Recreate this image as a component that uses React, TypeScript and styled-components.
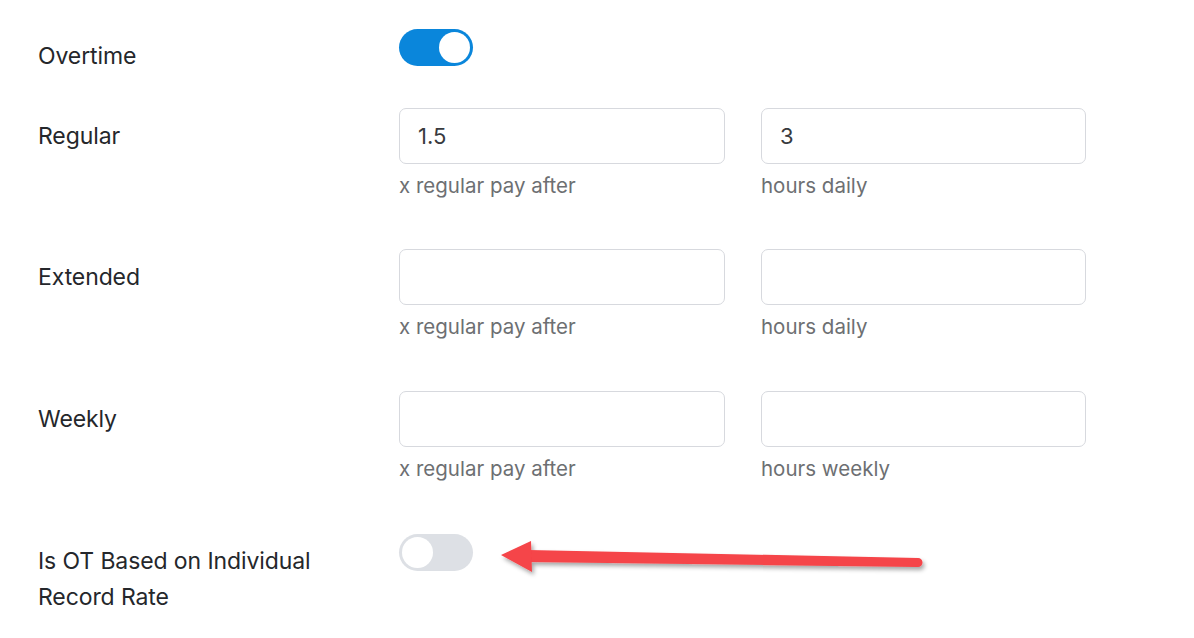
import React from "react";
import styled, { createGlobalStyle } from "styled-components";

const GlobalStyle = createGlobalStyle`
  html, body { margin: 0; padding: 0; background: #ffffff; }
  body { font-family: "Inter", "Noto Sans", sans-serif; }
  * { box-sizing: border-box; }
`;

const Page = styled.div`
  position: relative;
  width: 1194px;
  height: 638px;
  padding: 29px 0 0 38px;
  overflow: hidden;
`;

const Row = styled.div<{ $gapAfter: number }>`
  display: grid;
  grid-template-columns: 325px 326px 325px;
  column-gap: 36px;
  align-items: start;
  margin-bottom: ${(p) => p.$gapAfter}px;
`;

const Label = styled.div<{ $offset?: number; $tall?: boolean }>`
  font-size: 23px;
  line-height: 36px;
  color: #25272b;
  letter-spacing: -0.1px;
  padding-top: ${(p) => p.$offset ?? 0}px;
  ${(p) => (p.$tall ? "height: 56px; display: flex; align-items: center;" : "")}
`;

const Field = styled.div`
  display: flex;
  flex-direction: column;
`;

const Input = styled.input`
  width: 100%;
  height: 56px;
  border: 1px solid #d7d9de;
  border-radius: 7px;
  padding: 0 18px;
  font-family: inherit;
  font-size: 22px;
  color: #383a3e;
  background: #fff;
  outline: none;
`;

const Helper = styled.div`
  margin-top: 9px;
  font-size: 20.5px;
  line-height: 26px;
  color: #6d6f72;
`;

const Track = styled.div<{ $on: boolean }>`
  position: relative;
  width: 74px;
  height: 37px;
  border-radius: 19px;
  background: ${(p) => (p.$on ? "#0a86db" : "#dde0e5")};
`;

const Knob = styled.div<{ $on: boolean }>`
  position: absolute;
  top: 3px;
  left: ${(p) => (p.$on ? "40px" : "3px")};
  width: 31px;
  height: 31px;
  border-radius: 50%;
  background: #ffffff;
`;

const Arrow = styled.svg`
  position: absolute;
  left: 490px;
  top: 530px;
`;

function Toggle({ on }: { on: boolean }) {
  return (
    <Track $on={on}>
      <Knob $on={on} />
    </Track>
  );
}

const rows = [
  { label: "Regular", a: "1.5", b: "3", hb: "hours daily", gap: 50 },
  { label: "Extended", a: "", b: "", hb: "hours daily", gap: 51 },
  { label: "Weekly", a: "", b: "", hb: "hours weekly", gap: 52 },
];

export default function App() {
  return (
    <>
      <GlobalStyle />
      <Page>
        <Row $gapAfter={34}>
          <Label $offset={9}>Overtime</Label>
          <Toggle on />
        </Row>
        {rows.map((r) => (
          <Row key={r.label} $gapAfter={r.gap}>
            <Label $tall>{r.label}</Label>
            <Field>
              <Input defaultValue={r.a} />
              <Helper>x regular pay after</Helper>
            </Field>
            <Field>
              <Input defaultValue={r.b} />
              <Helper>{r.hb}</Helper>
            </Field>
          </Row>
        ))}
        <Row $gapAfter={0}>
          <Label $offset={9}>
            Is OT Based on Individual
            <br />
            Record Rate
          </Label>
          <Toggle on={false} />
        </Row>
        <Arrow width="445" height="60" viewBox="490 530 445 60">
          <defs>
            <filter id="sh" x="-10%" y="-50%" width="120%" height="200%">
              <feDropShadow dx="2" dy="3" stdDeviation="2" floodColor="#000" floodOpacity="0.35" />
            </filter>
          </defs>
          <g filter="url(#sh)" fill="#f54448">
            <path d="M528 550 L918 558 A4.5 4.5 0 0 1 918 567 L528 562 Z" />
            <path d="M501 555 L531 541 L532 572 Z" />
          </g>
        </Arrow>
      </Page>
    </>
  );
}
